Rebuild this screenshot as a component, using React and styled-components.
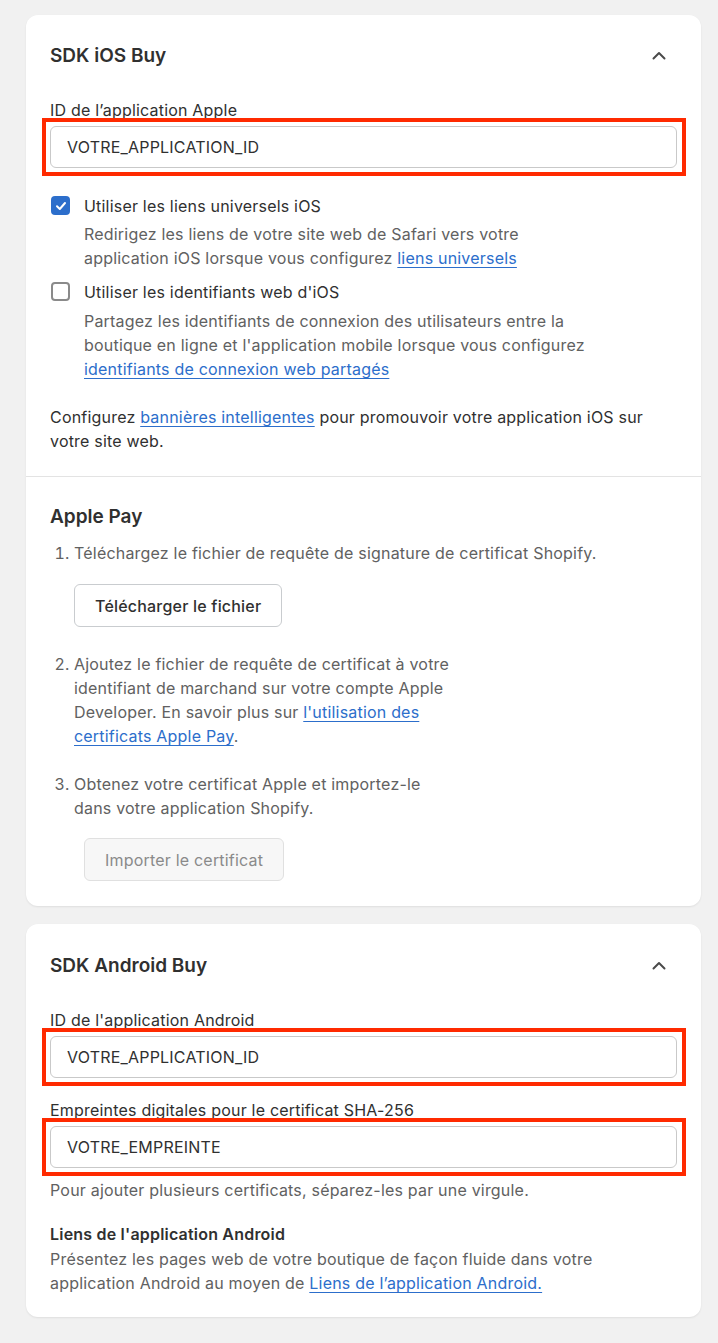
import React from 'react';
import styled, { createGlobalStyle } from 'styled-components';

const GlobalStyle = createGlobalStyle`
  body {
    margin: 0;
    background: #f1f1f1;
    font-family: Inter, "Noto Sans", sans-serif;
    color: #303030;
    letter-spacing: 0.2px;
  }
`;

const Page = styled.div`
  padding: 15px 17px 26px 26px;
  display: flex;
  flex-direction: column;
  gap: 18px;
`;

const Card = styled.div`
  background: #fff;
  border-radius: 12px;
  box-shadow: 0 1px 2px rgba(0, 0, 0, 0.08);
`;

const Section = styled.div`
  padding: ${(p) => p.$pad || '29px 24px 23px'};
  & + & {
    border-top: 1px solid #e3e3e3;
  }
`;

const Header = styled.div`
  display: flex;
  align-items: center;
  justify-content: space-between;
  height: 24px;
`;

const Title = styled.h2`
  margin: 0;
  font-size: 19px;
  line-height: 24px;
  font-weight: 600;
  letter-spacing: 0;
`;

const Chevron = styled.button`
  border: 0;
  background: none;
  padding: 0;
  margin-right: 10px;
  display: flex;
  color: #4a4a4a;
`;

const Field = styled.div`
  margin-top: ${(p) => p.$top || '32px'};
  display: flex;
  flex-direction: column;
  gap: 6px;
`;

const Label = styled.label`
  font-size: 16px;
  line-height: 20px;
`;

const Highlight = styled.div`
  margin: -8px -9px -8px -8px;
  padding: 4px;
  border: 4px solid #ff2a00;
  display: flex;
  flex-direction: column;
`;

const Input = styled.input`
  height: 42px;
  box-sizing: border-box;
  border: 1px solid #c9c9c9;
  border-radius: 6px;
  padding: 0 16px;
  font-family: inherit;
  font-size: 16px;
  letter-spacing: 0.2px;
  color: #303030;
  margin-right: 1px;
  outline: none;
`;

const CheckRow = styled.div`
  margin-top: ${(p) => p.$top};
  display: grid;
  grid-template-columns: 34px 1fr;
  row-gap: ${(p) => p.$gap};
`;

const Box = styled.span`
  width: 19px;
  height: 19px;
  box-sizing: border-box;
  border-radius: 4px;
  margin: 2px 0 0 1px;
  display: flex;
  align-items: center;
  justify-content: center;
  background: ${(p) => (p.$checked ? '#2c6ecb' : '#fff')};
  border: ${(p) => (p.$checked ? 'none' : '2px solid #8a8a8a')};
`;

const CheckLabel = styled.span`
  font-size: 16px;
  line-height: 24px;
`;

const Help = styled.p`
  grid-column: 2;
  margin: 0;
  font-size: 16px;
  line-height: 24px;
  color: #616161;
  max-width: ${(p) => p.$max || 'none'};
`;

const Link = styled.a`
  color: #2c6ecb;
  text-decoration: underline;
  text-decoration-thickness: 1px;
  text-underline-offset: 3px;
`;

const Para = styled.p`
  margin: ${(p) => p.$margin || '0'};
  font-size: 16px;
  line-height: 24px;
  color: ${(p) => (p.$muted ? '#616161' : '#303030')};
  max-width: ${(p) => p.$max || 'none'};
`;

const Steps = styled.ol`
  margin: 12px 0 0;
  padding: 0 0 0 24px;
  font-size: 16px;
  line-height: 24px;
  color: #616161;
`;

const Step = styled.li`
  margin-top: ${(p) => p.$top || '0'};
  max-width: ${(p) => p.$max || 'none'};
`;

const Button = styled.button`
  display: block;
  margin: ${(p) => p.$margin};
  height: 43px;
  box-sizing: border-box;
  padding: 0 20px;
  border-radius: 6px;
  font-family: inherit;
  font-size: 16px;
  letter-spacing: 0.2px;
  background: ${(p) => (p.disabled ? '#f7f7f7' : '#fff')};
  color: ${(p) => (p.disabled ? '#8a8a8a' : '#303030')};
  border: 1px solid ${(p) => (p.disabled ? '#e0e0e0' : '#c9cccf')};
  font-weight: ${(p) => (p.disabled ? 400 : 500)};
`;

const SubTitle = styled.h3`
  margin: 22px 0 0;
  font-size: 16px;
  line-height: 20px;
  font-weight: 600;
`;

function ChevronUp() {
  return (
    <Chevron aria-label="Réduire">
      <svg width="16" height="16" viewBox="0 0 16 16" fill="none">
        <path d="M2.5 10.5 8 5l5.5 5.5" stroke="currentColor" strokeWidth="2" strokeLinecap="round" strokeLinejoin="round" />
      </svg>
    </Chevron>
  );
}

function Check() {
  return (
    <svg width="12" height="12" viewBox="0 0 12 12" fill="none">
      <path d="M2 6.3 4.8 9 10 3" stroke="#fff" strokeWidth="2" strokeLinecap="round" strokeLinejoin="round" />
    </svg>
  );
}

export default function App() {
  return (
    <>
      <GlobalStyle />
      <Page>
        <Card>
          <Section>
            <Header>
              <Title>SDK iOS Buy</Title>
              <ChevronUp />
            </Header>
            <Field>
              <Label>ID de l’application Apple</Label>
              <Highlight>
                <Input defaultValue="VOTRE_APPLICATION_ID" />
              </Highlight>
            </Field>
            <CheckRow $top="26px" $gap="4px">
              <Box $checked>
                <Check />
              </Box>
              <CheckLabel>Utiliser les liens universels iOS</CheckLabel>
              <Help $max="460px">
                Redirigez les liens de votre site web de Safari vers votre application iOS lorsque vous
                configurez <Link>liens universels</Link>
              </Help>
            </CheckRow>
            <CheckRow $top="10px" $gap="5px">
              <Box />
              <CheckLabel>Utiliser les identifiants web d'iOS</CheckLabel>
              <Help $max="505px">
                Partagez les identifiants de connexion des utilisateurs entre la boutique en ligne et
                l'application mobile lorsque vous configurez{' '}
                <Link>identifiants de connexion web partagés</Link>
              </Help>
            </CheckRow>
            <Para $margin="24px 0 0">
              Configurez <Link>bannières intelligentes</Link> pour promouvoir votre application iOS sur
              votre site web.
            </Para>
          </Section>
          <Section $pad="28px 24px 25px">
            <Title>Apple Pay</Title>
            <Steps>
              <Step>Téléchargez le fichier de requête de signature de certificat Shopify.</Step>
              <Button $margin="19px 0 0">Télécharger le fichier</Button>
              <Step $top="25px" $max="390px">
                Ajoutez le fichier de requête de certificat à votre identifiant de marchand sur votre
                compte Apple Developer. En savoir plus sur{' '}
                <Link>l'utilisation des certificats Apple Pay</Link>.
              </Step>
              <Step $top="24px" $max="365px">
                Obtenez votre certificat Apple et importez-le dans votre application Shopify.
              </Step>
              <Button disabled $margin="18px 0 0 10px">
                Importer le certificat
              </Button>
            </Steps>
          </Section>
        </Card>
        <Card>
          <Section $pad="30px 24px 22px">
            <Header>
              <Title>SDK Android Buy</Title>
              <ChevronUp />
            </Header>
            <Field>
              <Label>ID de l'application Android</Label>
              <Highlight>
                <Input defaultValue="VOTRE_APPLICATION_ID" />
              </Highlight>
            </Field>
            <Field $top="22px">
              <Label>Empreintes digitales pour le certificat SHA-256</Label>
              <Highlight>
                <Input defaultValue="VOTRE_EMPREINTE" />
              </Highlight>
            </Field>
            <Para $muted $margin="10px 0 0">
              Pour ajouter plusieurs certificats, séparez-les par une virgule.
            </Para>
            <SubTitle>Liens de l'application Android</SubTitle>
            <Para $muted $margin="3px 0 0" $max="560px">
              Présentez les pages web de votre boutique de façon fluide dans votre application Android
              au moyen de <Link>Liens de l’application Android.</Link>
            </Para>
          </Section>
        </Card>
      </Page>
    </>
  );
}
